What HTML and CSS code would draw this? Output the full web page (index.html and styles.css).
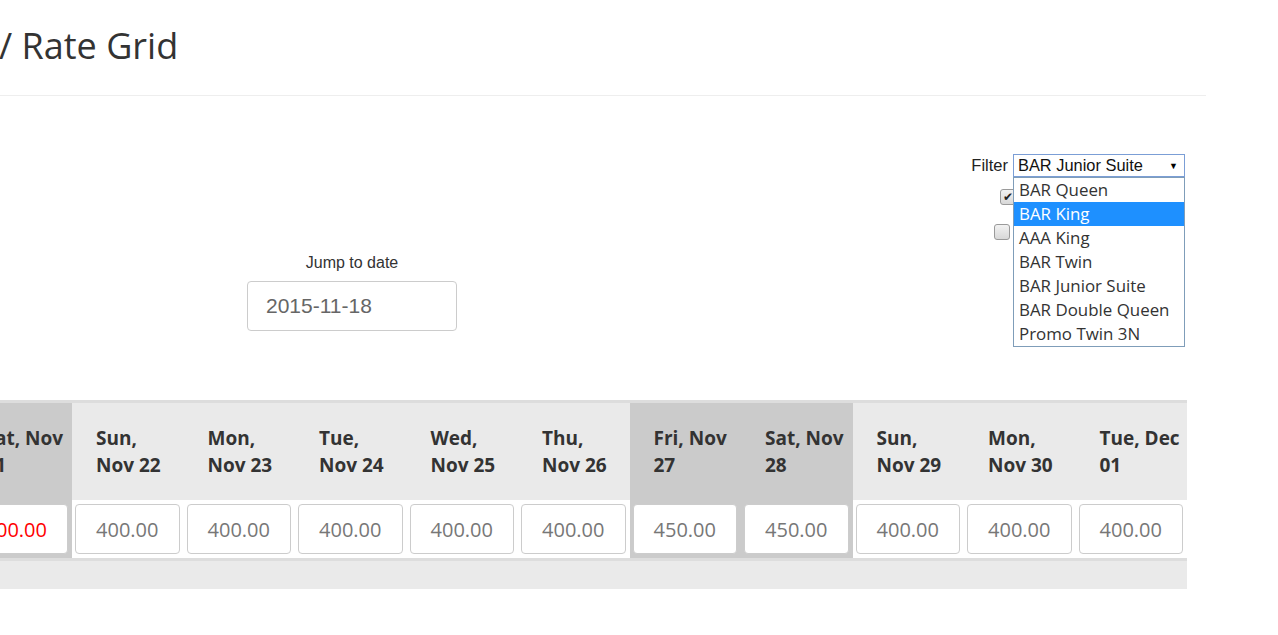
FILE: index.html
```html
<!DOCTYPE html>
<html>
<head>
<meta charset="utf-8">
<link rel="stylesheet" href="styles.css">
</head>
<body>
<div class="page">
  <h1 class="title">/ Rate Grid</h1>
  <div class="toolbar">
    <div class="filter-row">
      <span class="filter-label">Filter</span>
      <div class="select">
        <span class="select-value">BAR Junior Suite</span>
        <span class="select-arrow">▼</span>
        <ul class="options">
          <li>BAR Queen</li>
          <li class="active">BAR King</li>
          <li>AAA King</li>
          <li>BAR Twin</li>
          <li>BAR Junior Suite</li>
          <li>BAR Double Queen</li>
          <li>Promo Twin 3N</li>
        </ul>
      </div>
    </div>
    <div class="checks">
      <div class="check-row first"><span class="cb checked">✔</span></div>
      <div class="check-row second"><span class="cb"></span></div>
    </div>
    <div class="jump">
      <div class="jump-label">Jump to date</div>
      <input class="jump-input" type="text" value="2015-11-18">
    </div>
  </div>
  <div class="grid">
    <div class="grid-head">
      <div class="head-cell weekend">Sat, Nov<br>21</div>
      <div class="head-cell">Sun,<br>Nov 22</div>
      <div class="head-cell">Mon,<br>Nov 23</div>
      <div class="head-cell">Tue,<br>Nov 24</div>
      <div class="head-cell">Wed,<br>Nov 25</div>
      <div class="head-cell">Thu,<br>Nov 26</div>
      <div class="head-cell weekend">Fri, Nov<br>27</div>
      <div class="head-cell weekend">Sat, Nov<br>28</div>
      <div class="head-cell">Sun,<br>Nov 29</div>
      <div class="head-cell">Mon,<br>Nov 30</div>
      <div class="head-cell">Tue, Dec<br>01</div>
    </div>
    <div class="grid-values">
      <div class="value-cell weekend"><input class="rate changed" type="text" value="400.00"></div>
      <div class="value-cell"><input class="rate" type="text" value="400.00"></div>
      <div class="value-cell"><input class="rate" type="text" value="400.00"></div>
      <div class="value-cell"><input class="rate" type="text" value="400.00"></div>
      <div class="value-cell"><input class="rate" type="text" value="400.00"></div>
      <div class="value-cell"><input class="rate" type="text" value="400.00"></div>
      <div class="value-cell weekend"><input class="rate" type="text" value="450.00"></div>
      <div class="value-cell weekend"><input class="rate" type="text" value="450.00"></div>
      <div class="value-cell"><input class="rate" type="text" value="400.00"></div>
      <div class="value-cell"><input class="rate" type="text" value="400.00"></div>
      <div class="value-cell"><input class="rate" type="text" value="400.00"></div>
    </div>
    <div class="grid-foot"></div>
  </div>
</div>
</body>
</html>
```

FILE: styles.css
```css
html, body {
  margin: 0;
  padding: 0;
  background: #fff;
  overflow: hidden;
}

body {
  font-family: "Liberation Sans", Arial, sans-serif;
  color: #333;
}

.page {
  width: 1206px;
}

.title {
  margin: 0;
  padding: 25px 0 29px 0;
  text-indent: -1px;
  font-family: "Open Sans", sans-serif;
  font-weight: 400;
  font-size: 36px;
  line-height: 41px;
  color: #333;
  border-bottom: 1px solid #eee;
}

.toolbar {
  display: flex;
  flex-direction: column;
  padding-bottom: 69px;
}

.filter-row {
  display: flex;
  justify-content: flex-end;
  align-items: center;
  margin-top: 58px;
  padding-right: 21px;
  height: 23px;
}

.filter-label {
  font-size: 16.5px;
  margin-right: 5px;
  color: #222;
}

.select {
  position: relative;
  box-sizing: border-box;
  width: 172px;
  height: 23px;
  border: 1px solid #7b9ed6;
  display: flex;
  align-items: center;
  justify-content: space-between;
  padding: 0 6px 0 4px;
  font-size: 16.4px;
  color: #111;
  background: #fff;
}

.select-arrow {
  font-size: 9px;
  color: #000;
}

.options {
  position: absolute;
  left: -1px;
  top: 22px;
  width: 172px;
  box-sizing: border-box;
  margin: 0;
  padding: 0;
  list-style: none;
  border: 1px solid #7f9db9;
  background: #fff;
  font-family: "Open Sans", sans-serif;
  font-size: 16.9px;
  color: #333;
  z-index: 10;
}

.options li {
  height: 24px;
  line-height: 23px;
  padding-left: 5px;
  white-space: nowrap;
}

.options li.active {
  background: #1e90ff;
  color: #fff;
}

.checks {
  display: flex;
  flex-direction: column;
  align-items: flex-end;
}

.check-row {
  display: flex;
}

.check-row.first {
  margin-top: 12px;
  padding-right: 190px;
}

.check-row.second {
  margin-top: 19px;
  padding-right: 196px;
}

.cb {
  box-sizing: border-box;
  width: 16px;
  height: 16px;
  border: 1px solid #9a9a9a;
  border-radius: 3px;
  background: linear-gradient(#f2f2f2, #d8d8d8);
  font-size: 12px;
  line-height: 14px;
  text-align: center;
  color: #222;
  font-family: "DejaVu Sans", sans-serif;
}

.jump {
  margin-top: 13px;
  margin-left: 247px;
  width: 210px;
  display: flex;
  flex-direction: column;
  align-items: center;
}

.jump-label {
  font-size: 16px;
  line-height: 20px;
  color: #333;
}

.jump-input {
  margin-top: 8px;
  box-sizing: border-box;
  width: 210px;
  height: 50px;
  border: 1px solid #ccc;
  border-radius: 4px;
  padding: 0 18px;
  font-family: "Liberation Sans", Arial, sans-serif;
  font-size: 21px;
  color: #666;
  outline: none;
}

.grid {
  margin-left: -39.5px;
  width: 1226.5px;
  border-top: 3px solid #ddd;
}

.grid-head,
.grid-values {
  display: grid;
  grid-template-columns: repeat(11, 1fr);
}

.grid-head {
  height: 97px;
  background: #eaeaea;
}

.head-cell {
  display: flex;
  align-items: center;
  padding: 0 4px 0 24px;
  font-family: "Open Sans", sans-serif;
  font-weight: 700;
  font-size: 19px;
  line-height: 27px;
  color: #333;
  white-space: nowrap;
}

.head-cell.weekend,
.value-cell.weekend {
  background: #cbcbcb;
}

.grid-values {
  height: 58px;
  border-bottom: 3px solid #ddd;
  background: #fff;
}

.value-cell {
  box-sizing: border-box;
  padding: 4px 4px 4px 3px;
}

.rate {
  box-sizing: border-box;
  width: 100%;
  height: 50px;
  border: 1px solid #ccc;
  border-radius: 4px;
  font-family: "Open Sans", sans-serif;
  font-size: 20px;
  color: #777;
  text-align: center;
  padding: 0;
  outline: none;
  background: #fff;
}

.rate.changed {
  color: #f00;
}

.grid-foot {
  height: 28px;
  background: #eaeaea;
}
```
